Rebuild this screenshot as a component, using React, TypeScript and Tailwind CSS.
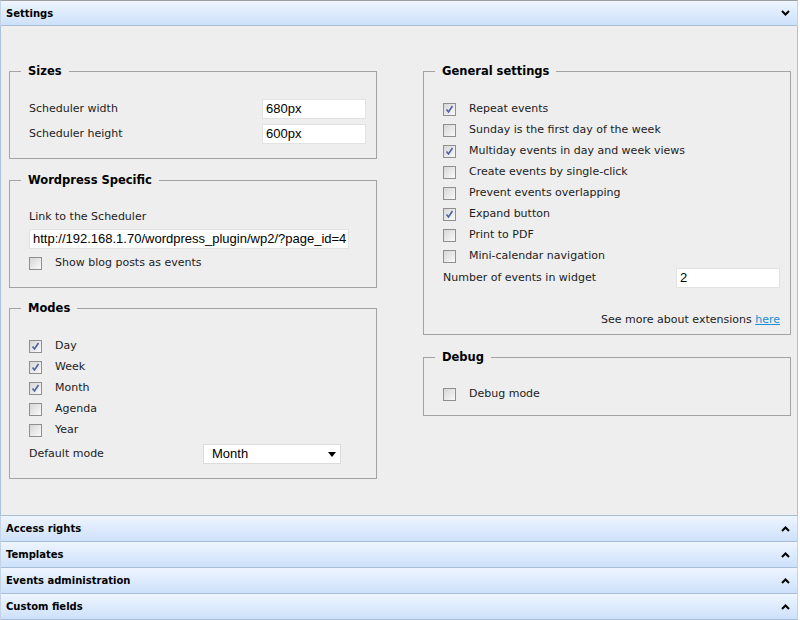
import React from 'react';

const checkRows = [
  { label: 'Repeat events', checked: true },
  { label: 'Sunday is the first day of the week', checked: false },
  { label: 'Multiday events in day and week views', checked: true },
  { label: 'Create events by single-click', checked: false },
  { label: 'Prevent events overlapping', checked: false },
  { label: 'Expand button', checked: true },
  { label: 'Print to PDF', checked: false },
  { label: 'Mini-calendar navigation', checked: false },
];

const modes = [
  { label: 'Day', checked: true },
  { label: 'Week', checked: true },
  { label: 'Month', checked: true },
  { label: 'Agenda', checked: false },
  { label: 'Year', checked: false },
];

function Chevron({ up }: { up?: boolean }) {
  return (
    <svg width="9" height="6" viewBox="0 0 9 6" className="block">
      <path
        d={up ? 'M1 5 L4.5 1.5 L8 5' : 'M1 1 L4.5 4.5 L8 1'}
        fill="none"
        stroke="#000"
        strokeWidth="2"
      />
    </svg>
  );
}

function Bar({ title, open }: { title: string; open?: boolean }) {
  return (
    <div
      className={`flex items-center justify-between border-b border-[#a8bdd6] bg-gradient-to-b from-[#eef5fe] to-[#cde1fb] pl-[5px] pr-[7px] text-[10px] font-bold text-black ${
        open ? 'h-[25px]' : 'h-[26px]'
      }`}
    >
      <span>{title}</span>
      <Chevron up={!open} />
    </div>
  );
}

function Check({ checked }: { checked: boolean }) {
  return (
    <span className="flex h-[13px] w-[13px] shrink-0 items-center justify-center border border-[#8f8f8f] bg-gradient-to-br from-[#d6d6d6] to-[#fafafa]">
      {checked && (
        <svg width="9" height="9" viewBox="0 0 9 9">
          <path d="M1.5 4.5 L3.5 7 L7.5 1" fill="none" stroke="#4c62a4" strokeWidth="1.6" />
        </svg>
      )}
    </span>
  );
}

function CheckRow({ label, checked }: { label: string; checked: boolean }) {
  return (
    <div className="flex h-[21px] items-center gap-[13px]">
      <Check checked={checked} />
      <span>{label}</span>
    </div>
  );
}

function Box({ title, className, children }: { title: string; className?: string; children: React.ReactNode }) {
  return (
    <fieldset className={`border border-[#a3a3a3] ${className ?? ''}`}>
      <legend className="-ml-[8px] px-[7px] text-[11.5px] leading-[16px] font-bold text-black">{title}</legend>
      {children}
    </fieldset>
  );
}

function TextInput({ value, className }: { value: string; className?: string }) {
  return (
    <div
      className={`flex h-[20px] items-center overflow-hidden whitespace-nowrap border border-[#e2e2e2] bg-white px-[3px] text-[13px] text-black ${className ?? ''}`}
      style={{ fontFamily: '"Liberation Sans", Arial, sans-serif' }}
    >
      {value}
    </div>
  );
}

export default function App() {
  return (
    <div
      className="h-[620px] w-[800px] bg-white text-[11px] text-[#1c1c1c]"
      style={{ fontFamily: '"DejaVu Sans", Verdana, sans-serif' }}
    >
      <div className="w-[798px]">
        <div className="border-x border-t border-x-[#c4d4e6] border-t-[#9f9f9f]">
          <Bar title="Settings" open />
        </div>

        <div className="grid h-[489px] grid-cols-[368px_368px] gap-x-[46px] border-x border-[#a9c2de] bg-[#eeeeee] pl-[8px] pt-[37px]">
          <div className="flex flex-col">
            <Box title="Sizes" className="pb-[14px] pl-[19px] pr-[10px] pt-[20px]">
              <div className="flex flex-col gap-[5px]">
                <div className="flex items-center justify-between">
                  <span className="pt-[1px]">Scheduler width</span>
                  <TextInput value="680px" className="w-[104px]" />
                </div>
                <div className="flex items-center justify-between">
                  <span className="pt-[1px]">Scheduler height</span>
                  <TextInput value="600px" className="w-[104px]" />
                </div>
              </div>
            </Box>

            <Box title="Wordpress Specific" className="mt-[13px] pb-[16px] pl-[19px] pt-[22px]">
              <div className="flex h-[14px] items-center pt-[1px]">Link to the Scheduler</div>
              <TextInput value="http://192.168.1.70/wordpress_plugin/wp2/?page_id=4" className="mt-[5px] w-[320px]" />
              <div className="mt-[6px] flex h-[16px] items-center gap-[13px]">
                <Check checked={false} />
                <span>Show blog posts as events</span>
              </div>
            </Box>

            <Box title="Modes" className="mt-[12px] pb-[14px] pl-[19px] pr-[35px] pt-[20px]">
              {modes.map((m) => (
                <CheckRow key={m.label} label={m.label} checked={m.checked} />
              ))}
              <div className="mt-[3px] flex items-center justify-between">
                <span className="pt-[1px]">Default mode</span>
                <div
                  className="flex h-[20px] w-[138px] items-center justify-between border border-[#dcdcdc] bg-white pl-[8px] pr-[4px] text-[13px] text-black"
                  style={{ fontFamily: '"Liberation Sans", Arial, sans-serif' }}
                >
                  <span>Month</span>
                  <svg width="8" height="5" viewBox="0 0 8 5">
                    <path d="M0 0 H8 L4 5 Z" fill="#000" />
                  </svg>
                </div>
              </div>
            </Box>
          </div>

          <div className="flex flex-col">
            <Box title="General settings" className="pb-[7px] pl-[19px] pr-[10px] pt-[20px]">
              {checkRows.map((r) => (
                <CheckRow key={r.label} label={r.label} checked={r.checked} />
              ))}
              <div className="mt-[1px] flex items-center justify-between">
                <span className="pt-[1px]">Number of events in widget</span>
                <TextInput value="2" className="w-[104px]" />
              </div>
              <div className="mt-[25px] flex h-[14px] items-center justify-end">
                <span>
                  See more about extensions{' '}
                  <a href="#" className="text-[#1a8fd6] underline">
                    here
                  </a>
                </span>
              </div>
            </Box>

            <Box title="Debug" className="mt-[14px] pb-[10px] pl-[19px] pt-[19px]">
              <CheckRow label="Debug mode" checked={false} />
            </Box>
          </div>
        </div>

        <div className="border-x border-t border-x-[#c4d4e6] border-t-[#a8bdd6]">
          <Bar title="Access rights" />
          <Bar title="Templates" />
          <Bar title="Events administration" />
          <Bar title="Custom fields" />
        </div>
      </div>
    </div>
  );
}
